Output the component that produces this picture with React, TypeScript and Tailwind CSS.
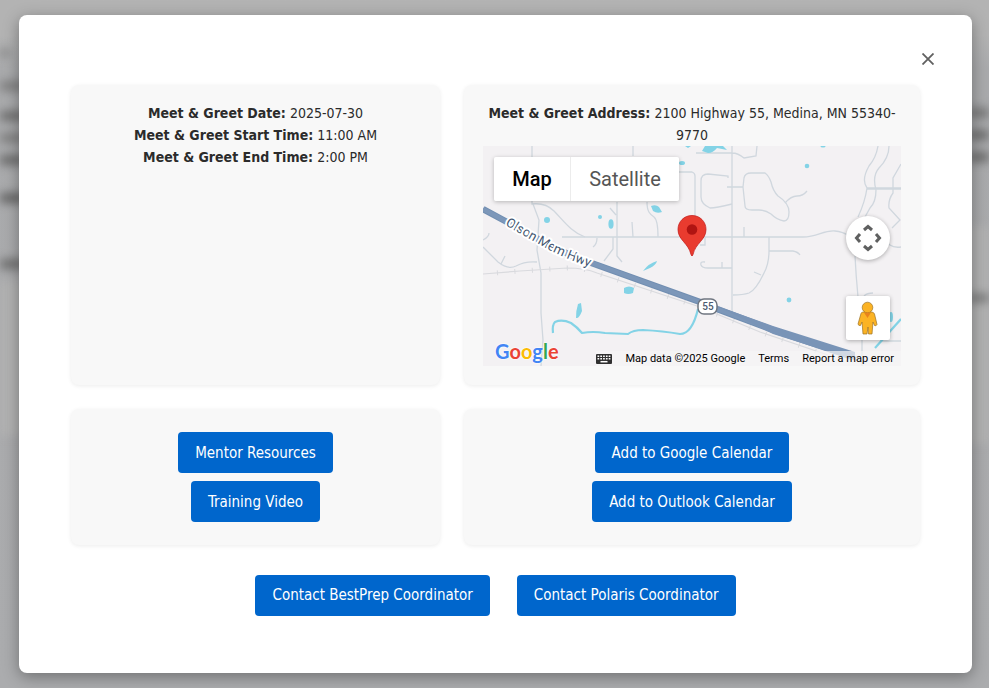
import type { ReactNode } from "react";

const roads = [
  "M49 0V58C58 57 66 60 71 65C80 74 88 86 102 91",
  "M50 58L56 74L54 104L58 127L58 167L60 194L58 220",
  "M150 0V10M134 56V110L139 116M127 62L133 69M149 76L150 91",
  "M164 56C164 66 167 68 171 71Q175 74 175 91",
  "M79 91H320C335 91 340 84 352 85S368 92 376 94C392 97 402 93 407 99Q411 102 418 101",
  "M114 92Q114 98 110 101M130 91V103L121 115",
  "M0 101L15 116Q25 124 33 120Q42 115 54 116M22 110L18 118M6 87Q6 91 0 94",
  "M213 7H249Q255 7 261 12L273 10L274 0M249 0V167",
  "M195 26H209Q212 27 212 30V70",
  "M245 32V30L225 28Q218 28 218 35V51Q218 58 227 62Q233 62 249 58",
  "M244 41H260L261 32Q262 27 268 27H282Q286 30 288 36Q290 45 295 50Q306 57 306 66Q306 75 301 75Q294 74 288 68Q282 64 276 64H269Q262 64 262 60L260 41",
  "M302 57Q308 50 314 50T324 45M261 81V91",
  "M395 0Q393 12 386 20Q378 34 384 42Q382 56 375 71M406 0Q406 12 396 22Q389 30 393 44Q393 56 387 62L382 71",
  "M384 42H418M384 43H418M418 18L410 32V47Q405 54 406 62L417 74L409 82",
  "M286 91V105Q286 118 281 127Q273 144 266 147Q260 149 250 149M286 105H310Q315 106 317 109M271 126L278 129",
  "M222 116Q217 115 218 119Q219 122 225 122H249M239 116V122M222 91V99H217",
  "M372 110Q373 130 375 151M381 150Q384 147 390 147M379 194V220M397 195H418",
];

const railway = "M0 128L37 125L84 122Q102 122 114 127L217 161L277 186L345 209";
const highway = "M0 63L24 76L70 101Q90 111 114 119L217 156L234 163L290 184L370 211";

function MapDrawing() {
  return (
    <svg
      viewBox="0 0 418 220"
      preserveAspectRatio="xMidYMid slice"
      className="block h-full w-full"
      role="img"
      aria-label="Street map around 2100 Highway 55"
    >
      <rect width="418" height="220" fill="#f3f1f3" />
      <g fill="none" stroke="#d0d7de" strokeWidth="1.3">
        {roads.map((d) => (
          <path key={d} d={d} />
        ))}
      </g>
      <path d={railway} fill="none" stroke="#d9dade" strokeWidth="1.2" />
      <path d={railway} fill="none" stroke="#d9dade" strokeWidth="5" strokeDasharray="1 16.5" strokeDashoffset="-14" />
      <g fill="#83d3e6">
        <circle cx="64" cy="74" r="3" />
        <circle cx="117" cy="71" r="2" />
        <ellipse cx="128" cy="78" rx="2.6" ry="4.8" />
        <path d="M168 60Q173 58 176 61L179 66Q174 68 170 65Z" />
        <ellipse cx="199" cy="17" rx="3" ry="2" />
        <path d="M202 0H208L205 2Z" />
        <path d="M222 0H240L244 4L234 2Q230 7 225 7L219 5Z" />
        <circle cx="324" cy="20" r="2.3" />
        <ellipse cx="340" cy="0" rx="2.6" ry="1.6" />
        <path d="M160 125Q166 117 174 115Q173 119 167 122Z" />
        <path d="M141 142Q146 139 151 142L150 147Q145 149 141 147Z" />
        <path d="M95 158L98 157L99 165Q96 173 93 172Q93 164 95 158Z" />
        <circle cx="306" cy="154" r="2.4" />
        <ellipse cx="408" cy="171" rx="2" ry="5" />
      </g>
      <g fill="none" stroke="#83d3e6" strokeWidth="2.2" strokeLinejoin="round">
        <path d="M70 187Q69 179 72 176Q79 173 88 177Q94 181 99 187Q110 185 122 187L145 188Q150 184 160 184Q180 185 197 188Q209 188 215 163" />
        <path d="M392 202L418 173" />
      </g>
      <path d={highway} fill="none" stroke="#718eb1" strokeWidth="6.5" />
      <path d={highway} fill="none" stroke="#7c97b9" strokeWidth="4.5" />
      <path d="M234 160L290 180L372 206V214L290 188Z" fill="#7994b7" />
      <path id="highway-name" d="M22 79L66 104Q88 115 118 125" fill="none" />
      <text
        fill="#43566f"
        stroke="#ffffff"
        strokeWidth="4"
        strokeLinejoin="round"
        paintOrder="stroke"
        className="font-[Roboto,sans-serif] text-[13px]"
      >
        <textPath href="#highway-name">Olson Mem Hwy</textPath>
      </text>
      <rect x="215" y="153" width="19" height="15" rx="6" fill="#ffffff" stroke="#6f7680" strokeWidth="1.5" />
      <text x="225" y="164" textAnchor="middle" fill="#4b5a70" className="font-[Roboto,sans-serif] text-[10px] font-medium">
        55
      </text>
      <path
        d="M209 69.500C201 69.500 195 75.700 195 83.500C195 94 205.500 97 208 108.500Q209 111.500 210 108.500C212.500 97 223 94 223 83.500C223 75.700 217 69.500 209 69.500Z"
        fill="#e93b2f"
        stroke="#c5221f"
        strokeWidth="0.8"
      />
      <circle cx="209" cy="83.500" r="5.300" fill="#b01412" />
    </svg>
  );
}

function CameraIcon() {
  return (
    <svg viewBox="0 0 44 44" className="h-11 w-11" fill="none" stroke="#5f6060" strokeWidth="3" aria-hidden="true">
      <path d="M18 14L22 10.500L26 14M18 30L22 33.500L26 30M14 18L10.500 22L14 26M30 18L33.500 22L30 26" />
    </svg>
  );
}

function PegmanIcon() {
  return (
    <svg viewBox="0 0 44 44" className="h-11 w-11" aria-hidden="true">
      <g fill="#fbb324" stroke="#9c7226" strokeWidth="0.7" strokeLinejoin="round">
        <path d="M15 17.500Q15 16.500 17 16H26Q28 16.500 28.500 18L31 28.500Q30 30.500 28.500 29.500L27 26L26 38H22.500L22 31L21 38H17L16 26L14.500 29.500Q12.500 30 12 28Z" />
        <circle cx="21.500" cy="11.500" r="5.300" />
      </g>
      <path d="M18 16.500H25L21.500 22Z" fill="#e8831c" />
    </svg>
  );
}

function KeyboardIcon() {
  return (
    <svg viewBox="0 0 16 10" className="h-2.5 w-4" aria-hidden="true">
      <rect width="16" height="10" rx="1" fill="#303030" />
      <g stroke="#ffffff" strokeWidth="1.500" fill="none">
        <path d="M1.500 2.300H15M1.500 4.800H15" strokeDasharray="1.700 1.100" />
        <path d="M4.500 7.700H11.500" />
      </g>
    </svg>
  );
}

function VenueMap() {
  return (
    <div className="relative h-[220px] overflow-hidden text-left font-[Roboto,sans-serif]">
      <MapDrawing />
      <div className="absolute top-[11px] left-[11px] flex h-11 gap-px rounded-xs bg-[#ececec] text-[20px] shadow-[0_1px_4px_rgba(0,0,0,0.25)]">
        <button type="button" className="w-[76px] rounded-l-xs bg-white font-medium text-black">
          Map
        </button>
        <button type="button" className="w-[108px] rounded-r-xs bg-white text-[#565656]">
          Satellite
        </button>
      </div>
      <button
        type="button"
        aria-label="Map camera controls"
        className="absolute top-[70px] right-[11px] rounded-full bg-white shadow-[0_1px_4px_rgba(0,0,0,0.3)]"
      >
        <CameraIcon />
      </button>
      <button
        type="button"
        aria-label="Open Street View"
        className="absolute top-[150px] right-[11px] rounded-xs bg-white shadow-[0_1px_4px_rgba(0,0,0,0.3)]"
      >
        <PegmanIcon />
      </button>
      <a
        href="#google-maps"
        className="absolute bottom-0 left-3 font-[Lato,sans-serif] text-[20px] leading-[30px] font-bold [text-shadow:0_0_2px_#fff,0_0_2px_#fff]"
      >
        <span className="text-[#4285f4]">G</span>
        <span className="text-[#ea4335]">o</span>
        <span className="text-[#fbbc04]">o</span>
        <span className="text-[#4285f4]">g</span>
        <span className="text-[#34a853]">l</span>
        <span className="text-[#ea4335]">e</span>
      </a>
      <div className="absolute right-0 bottom-0 flex h-[15px] items-center gap-[13px] bg-[#f5f5f5]/70 pr-[7px] text-[11px] text-black">
        <button type="button" aria-label="Keyboard shortcuts">
          <KeyboardIcon />
        </button>
        <span>Map data ©2025 Google</span>
        <a href="#terms">Terms</a>
        <a href="#report">Report a map error</a>
      </div>
    </div>
  );
}

function Card({ children }: { children: ReactNode }) {
  return (
    <section className="rounded-lg bg-[#f8f8f8] px-[19px] shadow-[0_1px_4px_rgba(0,0,0,0.08)]">{children}</section>
  );
}

function ActionButton({ children }: { children: ReactNode }) {
  return (
    <button
      type="button"
      className="h-[41px] rounded-sm bg-[#0066cc] px-[17px] text-[15px] whitespace-nowrap text-white"
    >
      {children}
    </button>
  );
}

function BlurredPage() {
  return (
    <div
      aria-hidden="true"
      className="absolute inset-0 flex justify-between overflow-hidden bg-linear-to-b from-[#b3b3b3] from-5% via-[#a9aaac] via-10% to-[#abacae]"
    >
      <div className="flex w-6 flex-col pt-[49px] blur-[5px]">
        <div className="mb-6 h-2 w-2.5 bg-[#888]" />
        <div className="mb-5 h-2.5 bg-[#808080]" />
        <div className="mb-3 h-2.5 bg-[#707070]" />
        <div className="mb-3 h-2.5 bg-[#808080]" />
        <div className="mb-7 h-2.5 bg-[#6c6c6c]" />
        <div className="mb-14 h-2.5 bg-[#666]" />
        <div className="h-2.5 bg-[#707070]" />
        <div className="mt-3 h-[155px] bg-[#b2b2b2]" />
      </div>
      <div className="flex w-5 flex-col pt-[108px] blur-[5px]">
        <div className="mb-3 h-2.5 bg-[#777]" />
        <div className="mb-3 h-2.5 bg-[#6c6c6c]" />
        <div className="h-2.5 bg-[#6c6c6c]" />
        <div className="mt-16 h-[218px] bg-[#b2b2b2] pt-[68px]">
          <div className="h-2 bg-[#777]" />
        </div>
      </div>
    </div>
  );
}

export default function App() {
  return (
    <div className="relative min-h-screen pt-[15px] pr-[17px] pb-[15px] pl-[19px] font-['DejaVu_Sans_Condensed','DejaVu_Sans',sans-serif] text-[#2b2b2b]">
      <BlurredPage />
      <main
        role="dialog"
        aria-label="Meet and greet details"
        className="relative rounded-lg bg-white px-[52px] pt-8 pb-[57px] shadow-[0_4px_16px_rgba(0,0,0,0.35)]"
      >
        <div className="-mr-[20px] flex h-[38px] items-start justify-end">
          <button type="button" aria-label="Close" className="flex h-6 w-6 items-center justify-center">
            <svg viewBox="0 0 12 12" className="h-3 w-3" stroke="#606060" strokeWidth="1.800" aria-hidden="true">
              <path d="M0.500 0.500L11.500 11.500M11.500 0.500L0.500 11.500" />
            </svg>
          </button>
        </div>
        <div className="grid grid-cols-[369fr_456fr] gap-6 text-center text-[14px] leading-[22px]">
          <Card>
            <div className="pt-[17px]">
              <p>
                <strong>Meet &amp; Greet Date:</strong> 2025-07-30
              </p>
              <p>
                <strong>Meet &amp; Greet Start Time:</strong> 11:00 AM
              </p>
              <p>
                <strong>Meet &amp; Greet End Time:</strong> 2:00 PM
              </p>
            </div>
          </Card>
          <Card>
            <div className="pt-[17px] pb-[19px]">
              <p>
                <strong>Meet &amp; Greet Address:</strong> 2100 Highway 55, Medina, MN 55340-9770
              </p>
              <VenueMap />
            </div>
          </Card>
          <Card>
            <div className="flex flex-col items-center gap-2 py-[23px]">
              <ActionButton>Mentor Resources</ActionButton>
              <ActionButton>Training Video</ActionButton>
            </div>
          </Card>
          <Card>
            <div className="flex flex-col items-center gap-2 py-[23px]">
              <ActionButton>Add to Google Calendar</ActionButton>
              <ActionButton>Add to Outlook Calendar</ActionButton>
            </div>
          </Card>
        </div>
        <div className="mt-[30px] flex flex-wrap justify-center gap-[27px]">
          <ActionButton>Contact BestPrep Coordinator</ActionButton>
          <ActionButton>Contact Polaris Coordinator</ActionButton>
        </div>
      </main>
    </div>
  );
}
